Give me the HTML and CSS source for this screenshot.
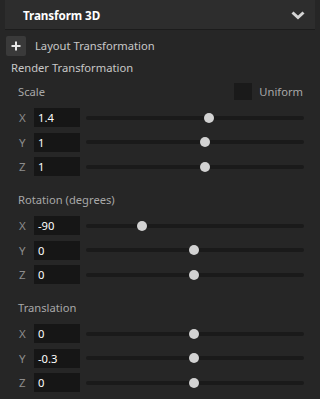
FILE: index.html
```html
<!DOCTYPE html>
<html>
<head>
<meta charset="utf-8">
<link rel="stylesheet" href="styles.css">
</head>
<body>
<div class="panel">
  <div class="header">
    <span class="title">Transform 3D</span>
    <svg class="chev" width="14" height="9" viewBox="0 0 14 9"><path d="M1.5 1.5 L7 6.5 L12.5 1.5" fill="none" stroke="#d4d4d4" stroke-width="3"/></svg>
  </div>
  <div class="addrow">
    <div class="plus"><svg width="10" height="10" viewBox="0 0 10 10"><path d="M5 0.5V9.5M0.5 5H9.5" stroke="#e8e8e8" stroke-width="2"/></svg></div>
    <span class="addlabel">Layout Transformation</span>
  </div>
  <div class="group-title">Render Transformation</div>

  <div class="section first">
    <div class="sec-head">
      <span class="sec-title">Scale</span>
      <div class="uniform"><span class="check"></span><span>Uniform</span></div>
    </div>
    <div class="rows">
      <div class="row"><span class="axis">X</span><div class="num">1.4</div><div class="track"><span class="thumb" style="left:56.4%"></span></div></div>
      <div class="row"><span class="axis">Y</span><div class="num">1</div><div class="track"><span class="thumb" style="left:54.6%"></span></div></div>
      <div class="row"><span class="axis">Z</span><div class="num">1</div><div class="track"><span class="thumb" style="left:54.6%"></span></div></div>
    </div>
  </div>

  <div class="section">
    <div class="sec-head"><span class="sec-title">Rotation (degrees)</span></div>
    <div class="rows">
      <div class="row"><span class="axis">X</span><div class="num">-90</div><div class="track"><span class="thumb" style="left:25.7%"></span></div></div>
      <div class="row"><span class="axis">Y</span><div class="num">0</div><div class="track"><span class="thumb" style="left:49.5%"></span></div></div>
      <div class="row"><span class="axis">Z</span><div class="num">0</div><div class="track"><span class="thumb" style="left:49.5%"></span></div></div>
    </div>
  </div>

  <div class="section">
    <div class="sec-head"><span class="sec-title">Translation</span></div>
    <div class="rows">
      <div class="row"><span class="axis">X</span><div class="num">0</div><div class="track"><span class="thumb" style="left:49.5%"></span></div></div>
      <div class="row"><span class="axis">Y</span><div class="num">-0.3</div><div class="track"><span class="thumb" style="left:49.5%"></span></div></div>
      <div class="row"><span class="axis">Z</span><div class="num">0</div><div class="track"><span class="thumb" style="left:49.5%"></span></div></div>
    </div>
  </div>
</div>
</body>
</html>
```
FILE: styles.css
```css
html, body {
  margin: 0;
  padding: 0;
  background: #262626;
  width: 320px;
  height: 399px;
  overflow: hidden;
  font-family: "Noto Sans", "Open Sans", sans-serif;
  font-size: 11px;
  color: #c4c4c4;
}
.panel {
  display: flex;
  flex-direction: column;
}
.header {
  margin: 0 5px;
  height: 30px;
  box-sizing: border-box;
  background: #2d2d2d;
  border-bottom: 1px solid #1c1c1c;
  display: flex;
  align-items: center;
  justify-content: space-between;
  padding: 0 10px 0 18px;
}
.title {
  font-weight: bold;
  font-size: 11.7px;
  color: #ffffff;
  letter-spacing: -0.1px;
}
.chev { margin-top: 1px; }
.addrow {
  margin-top: 6px;
  padding-left: 6px;
  height: 20px;
  display: flex;
  align-items: center;
  gap: 9px;
}
.plus {
  width: 20px;
  height: 20px;
  background: #3a3a3a;
  border-radius: 2px;
  display: flex;
  align-items: center;
  justify-content: center;
}
.addlabel { color: #c8c8c8; font-size: 11.2px; margin-top: -1px; }
.group-title {
  margin-top: 2px;
  height: 20px;
  line-height: 20px;
  padding-left: 11px;
  color: #c8c8c8;
  font-size: 11.2px;
}
.section {
  padding: 0 16px 0 19px;
  margin-top: 13px;
}
.section.first { margin-top: 3px; }
.sec-head {
  height: 20px;
  display: flex;
  align-items: center;
  justify-content: space-between;
}
.sec-title { color: #a8a8a8; margin-left: -1px; font-size: 11.2px; }
.uniform {
  display: flex;
  align-items: center;
  gap: 7px;
  color: #a8a8a8;
  font-size: 11.2px;
  margin-right: 1px;
}
.check {
  width: 18px;
  height: 17px;
  background: #1a1a1a;
  display: block;
}
.rows {
  margin-top: 7px;
  display: flex;
  flex-direction: column;
  gap: 5.5px;
}
.row {
  display: grid;
  grid-template-columns: 15px 46px 1fr;
  align-items: center;
  height: 19px;
}
.axis { color: #8c8c8c; font-size: 11.5px; }
.num {
  height: 19px;
  line-height: 19px;
  background: #161616;
  color: #ffffff;
  padding-left: 4px;
  box-sizing: border-box;
  font-size: 11.2px;
}
.track {
  position: relative;
  margin-left: 6px;
  height: 4px;
  border-radius: 2px;
  background: #1a1a1a;
}
.thumb {
  position: absolute;
  top: 50%;
  width: 10px;
  height: 10px;
  margin: -5px 0 0 -5px;
  border-radius: 50%;
  background: #d2d2d2;
}
```
